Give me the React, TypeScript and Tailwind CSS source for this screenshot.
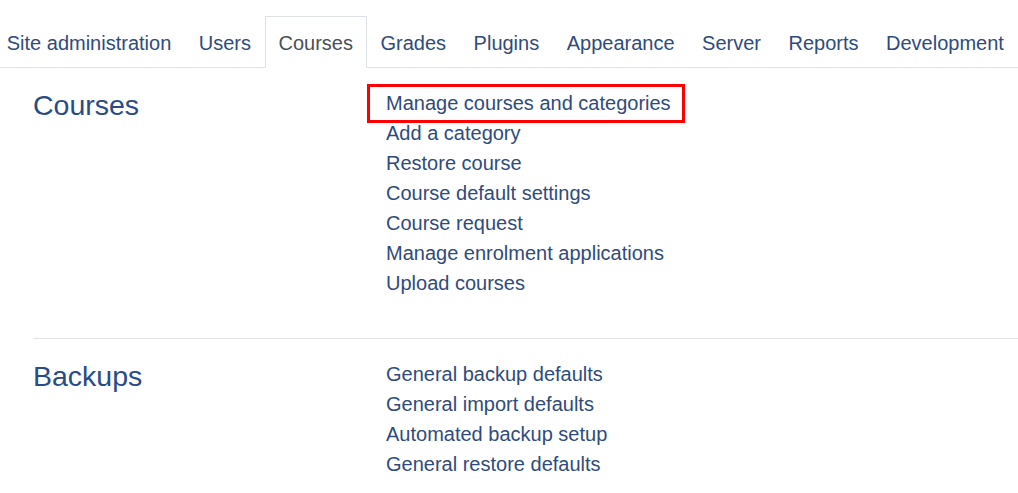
import React from 'react';

const tabs = ['Site administration', 'Users', 'Courses', 'Grades', 'Plugins', 'Appearance', 'Server', 'Reports', 'Development'];

const sections = [
  {
    title: 'Courses',
    links: [
      'Manage courses and categories',
      'Add a category',
      'Restore course',
      'Course default settings',
      'Course request',
      'Manage enrolment applications',
      'Upload courses',
    ],
  },
  {
    title: 'Backups',
    links: ['General backup defaults', 'General import defaults', 'Automated backup setup', 'General restore defaults'],
  },
];

export default function App() {
  return (
    <div className="min-h-[493px] bg-white overflow-hidden" style={{ fontFamily: '"Liberation Sans", Arial, sans-serif' }}>
      {/* tab strip */}
      <ul className="mt-[16px] flex border-b border-[#dee2e6] text-[20px] leading-[30px]">
        <div className="flex ml-[-7px]">
          {tabs.map((t) => {
            const active = t === 'Courses';
            return (
              <li
                key={t}
                className={
                  active
                    ? 'mb-[-1px] px-[12.75px] pt-[11px] pb-[9px] border border-[#dee2e6] border-b-white bg-white text-[#495057] whitespace-nowrap'
                    : 'mb-[-1px] px-[12.75px] pt-[11px] pb-[9px] border border-transparent text-[#2f4b7c] whitespace-nowrap'
                }
              >
                {t}
              </li>
            );
          })}
        </div>
      </ul>

      <div className="ml-[33px] mt-[20px]">
        {sections.map((s, i) => (
          <div key={s.title}>
            {i > 0 && <hr className="mt-[40px] mb-[20px] border-0 border-t border-[#e3e3e3]" />}
            <div className="flex">
              <h3 className="w-[353px] shrink-0 text-[28.5px] leading-[34px] text-[#2a4b85]">{s.title}</h3>
              <ul className="text-[20px] leading-[30px] text-[#2f4b7c]">
                {s.links.map((l, j) => (
                  <li key={l} className="relative">
                    {i === 0 && j === 0 && (
                      <span className="absolute left-[-19px] top-[-4px] w-[318px] h-[39px] border-[3px] border-[#ff0000]" />
                    )}
                    <a href="#" className="relative">{l}</a>
                  </li>
                ))}
              </ul>
            </div>
          </div>
        ))}
      </div>
    </div>
  );
}
